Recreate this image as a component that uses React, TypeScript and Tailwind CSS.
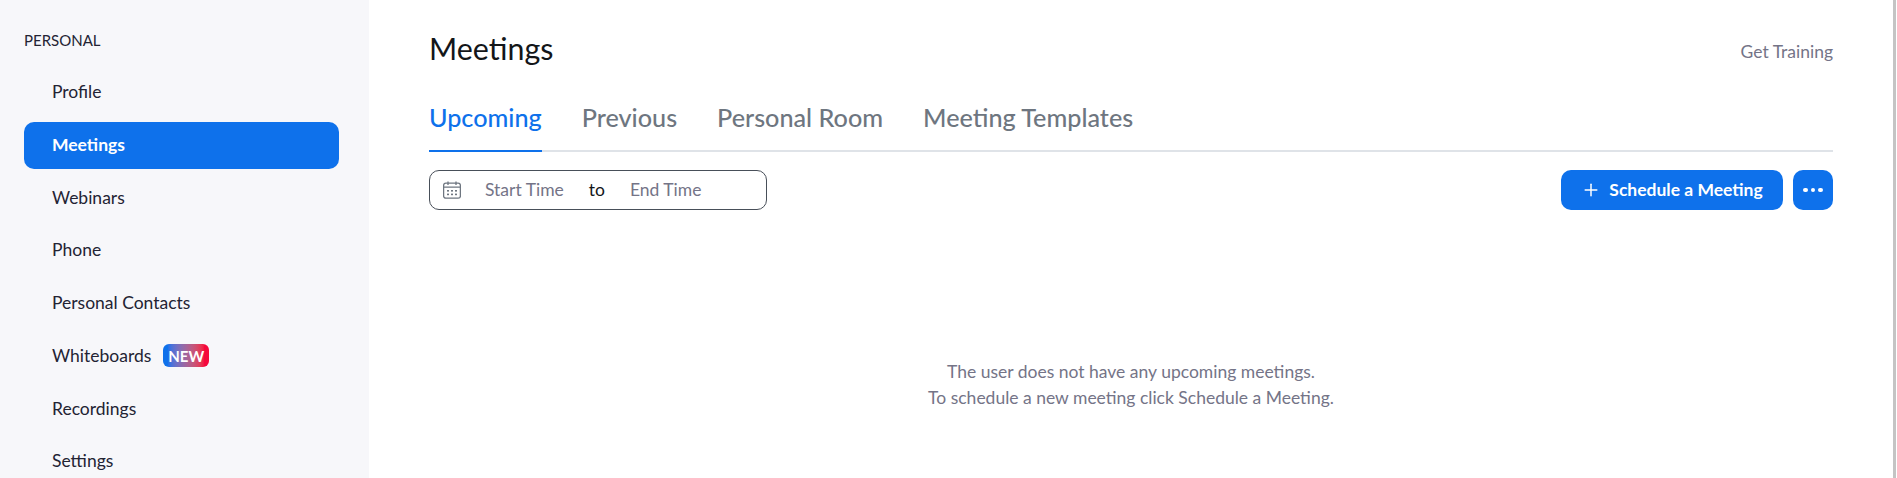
import React from "react";
import { Plus } from "lucide-react";

const items = ["Profile", "Meetings", "Webinars", "Phone", "Personal Contacts", "Whiteboards", "Recordings", "Settings"];
const tabs = ["Upcoming", "Previous", "Personal Room", "Meeting Templates"];

function Calendar() {
  return (
    <svg width="18" height="18" viewBox="0 0 18 18" fill="none" stroke="#6e7680" strokeWidth="1.3">
      <rect x="0.6" y="2.2" width="16.8" height="15" rx="2.2" />
      <path d="M1 6.2h16M5 0.5v3.4M13 0.5v3.4" />
      <g fill="#6e7680" stroke="none">
        <rect x="4" y="9" width="2" height="1.6" />
        <rect x="8" y="9" width="2" height="1.6" />
        <rect x="12" y="9" width="2" height="1.6" />
        <rect x="4" y="12.6" width="2" height="1.6" />
        <rect x="8" y="12.6" width="2" height="1.6" />
        <rect x="12" y="12.6" width="2" height="1.6" />
      </g>
    </svg>
  );
}

export default function App() {
  return (
    <div className="flex h-[478px] w-[1897px] overflow-hidden bg-white font-['Lato','Noto_Sans',sans-serif]">
      <aside className="flex w-[369px] shrink-0 flex-col bg-[#f7f7fa] pl-6 pr-[30px] pt-[31px]">
        <div className="mb-[20px] text-[15px] leading-[18px] text-[#232333]">PERSONAL</div>
        <nav className="flex flex-col gap-[5.7px]">
          {items.map((item) => (
            <div
              key={item}
              className={
                "flex h-[47px] shrink-0 items-center rounded-[10px] pl-7 text-[17.5px] " +
                (item === "Meetings" ? "bg-[#0e71eb] font-bold text-white" : "text-[#232333]")
              }
            >
              {item}
              {item === "Whiteboards" && (
                <span className="ml-[12px] flex h-[23px] w-[46px] items-center justify-center rounded-[6px] bg-gradient-to-r from-[#0e71eb] from-10% to-[#f5083c] to-90% text-[15px] font-bold text-white">
                  NEW
                </span>
              )}
            </div>
          ))}
        </nav>
      </aside>
      <main className="flex min-w-0 flex-1 flex-col pl-[60px] pr-[60px]">
        <div className="flex items-start justify-between pt-[28px]">
          <h1 className="text-[30.4px] leading-[40px] text-[#131619]">Meetings</h1>
          <a className="mt-[14px] text-[17.5px] leading-[20px] text-[#747487]">Get Training</a>
        </div>
        <div className="mt-[30px] flex gap-10 border-b-2 border-[#dfe3e8]">
          {tabs.map((tab) => (
            <div
              key={tab}
              className={
                "-mb-[2px] border-b-2 pb-[14px] text-[25.2px] font-medium leading-[38px] " +
                (tab === "Upcoming" ? "border-[#0e71eb] text-[#0e71eb]" : "border-transparent text-[#6e7680]")
              }
            >
              {tab}
            </div>
          ))}
        </div>
        <div className="mt-[18px] flex items-center justify-between">
          <div className="flex h-10 w-[338px] items-center rounded-[10px] border border-[#484f59] pl-[13px] text-[17.5px]">
            <Calendar />
            <span className="ml-[24px] text-[#747487]">Start Time</span>
            <span className="ml-[25px] text-[#131619]">to</span>
            <span className="ml-[25px] text-[#747487]">End Time</span>
          </div>
          <div className="flex gap-[10px]">
            <button className="flex h-10 w-[222px] items-center justify-center gap-[8px] rounded-[10px] bg-[#0e71eb] text-[17.5px] font-bold text-white">
              <Plus size={20} strokeWidth={1.8} />
              Schedule a Meeting
            </button>
            <button className="flex h-10 w-10 items-center justify-center gap-[3px] rounded-[10px] bg-[#0e71eb]">
              <span className="h-[4.5px] w-[4.5px] rounded-full bg-white" />
              <span className="h-[4.5px] w-[4.5px] rounded-full bg-white" />
              <span className="h-[4.5px] w-[4.5px] rounded-full bg-white" />
            </button>
          </div>
        </div>
        <div className="mt-[149px] text-center text-[17.5px] leading-[26px] text-[#747487]">
          <p>The user does not have any upcoming meetings.</p>
          <p>To schedule a new meeting click Schedule a Meeting.</p>
        </div>
      </main>
      <div className="w-[3px] shrink-0 bg-[#c4c4c4]" />
      <div className="w-[1px] shrink-0 bg-white" />
    </div>
  );
}
